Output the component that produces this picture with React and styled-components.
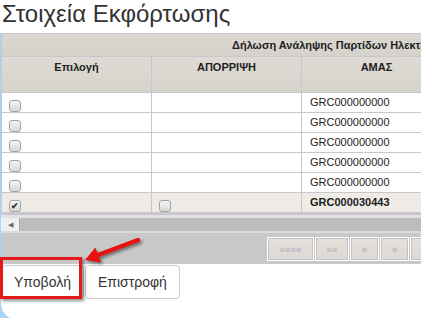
import React from 'react';
import styled, { createGlobalStyle } from 'styled-components';

const GlobalStyle = createGlobalStyle`
    html, body {
        margin: 0;
        padding: 0;
        overflow: hidden;
        background: #fff;
    }
    body {
        font-family: "Liberation Sans", Arial, sans-serif;
        color: #222;
    }
`;

const Page = styled.div`
    position: relative;
    width: 421px;
    height: 318px;
    overflow: hidden;
`;

const Title = styled.h1`
    margin: 0 0 5px;
    padding-left: 2px;
    height: 28px;

    font-size: 24px;
    line-height: 28px;
    font-weight: normal;
    color: #333;
    white-space: nowrap;
`;

const Frame = styled.div`
    height: 287px;
    padding-left: 1px;
    background: #aad4f6;
`;

const Panel = styled.div`
    height: 100%;
    background: #fff;
    border-bottom-left-radius: 17px;
    overflow: hidden;
`;

const Table = styled.div`
    width: 620px;
    border-top: 1px solid #c9c6ce;
    border-left: 1px solid #c9c6ce;
`;

const Caption = styled.div`
    height: 22px;
    padding-left: 230px;

    font-size: 11px;
    font-weight: bold;
    line-height: 22px;
    white-space: nowrap;
    color: #222;

    background: linear-gradient(#dcd8d2, #d5d1cb);
    border-bottom: 1px solid #c9c6ce;
`;

const Row = styled.div`
    display: grid;
    grid-template-columns: 150px 150px 150px 1fr;
    background: ${p => (p.$selected ? '#efebe7' : '#fff')};
    font-weight: ${p => (p.$selected ? 'bold' : 'normal')};
`;

const HeadCell = styled.div`
    height: 36px;
    padding-top: 4px;
    box-sizing: border-box;

    font-size: 11px;
    font-weight: bold;
    line-height: 13px;
    text-align: center;
    color: #222;

    background: linear-gradient(#dedad4, #d6d2cc);
    border-right: 1px solid #c9c6ce;
    border-bottom: 1px solid #c9c6ce;
`;

const Cell = styled.div`
    height: 19px;
    padding-left: ${p => (p.$box ? '7px' : '8px')};

    font-size: 11px;
    line-height: 19px;
    white-space: nowrap;
    color: #1c1c1c;

    border-right: 1px solid #c9c6ce;
    border-bottom: 1px solid #c9c6ce;
`;

const Check = styled.span`
    display: flex;
    align-items: center;
    justify-content: center;
    width: 12px;
    height: 12px;
    margin-top: 7px;
    box-sizing: border-box;

    font-size: 9px;
    line-height: 1;
    color: #333;

    background: linear-gradient(#f4f4f4, #d9d9d9);
    border: 1px solid #a3a3a3;
    border-radius: 3px;
`;

const ScrollArea = styled.div`
    padding-top: 3px;
    background: #e2e2e2;
    border-top: 2px solid #cac6cf;
    border-bottom: 2px solid #dcdcdc;
`;

const ScrollBar = styled.div`
    display: flex;
    height: 13px;
`;

const ScrollButton = styled.div`
    width: 18px;
    display: flex;
    align-items: center;
    justify-content: center;

    font-size: 7px;
    color: #6a6a6a;
    background: #f0f0f0;
`;

const ScrollThumb = styled.div`
    flex: 1;
    background: #bcbcbc;
    border-left: 1px solid #a9a9a9;
`;

const Pager = styled.div`
    display: flex;
    gap: 1px;
    height: 31px;
    padding: 4px 0 0 266px;
    box-sizing: border-box;
    background: #c8c8c8;
`;

const PageButton = styled.div`
    width: ${p => p.$w}px;
    height: 24px;
    box-sizing: border-box;
    display: flex;
    align-items: center;
    justify-content: center;
    flex-shrink: 0;

    font-size: 10px;
    font-weight: bold;
    color: #bab6c2;

    background: linear-gradient(#e4e0dc, #dcd8d4);
    border: 1px solid #fff;
    box-shadow: inset 0 0 0 1px #c4c0c8;
`;

const Actions = styled.div`
    display: flex;
    gap: 1px;
    margin-top: 1px;
`;

const Button = styled.button`
    height: 34px;
    padding: 0 12px;

    font-family: "Liberation Sans", Arial, sans-serif;
    font-size: 14px;
    color: #333;

    background: #fff;
    border: 1px solid #ccc;
    border-radius: 4px;
`;

const Callout = styled.div`
    position: absolute;
    left: 0;
    top: 257px;
    width: 82px;
    height: 42px;
    box-sizing: border-box;

    border: 3px solid #e41a1a;
    box-shadow: 2px 2px 3px rgba(0, 0, 0, 0.45);
    pointer-events: none;
`;

const Arrow = styled.svg`
    position: absolute;
    left: 0;
    top: 0;
    width: 421px;
    height: 318px;
    pointer-events: none;
    filter: drop-shadow(2px 2px 1.5px rgba(0, 0, 0, 0.45));
`;

const rows = [
    { code: 'GRC000000000' },
    { code: 'GRC000000000' },
    { code: 'GRC000000000' },
    { code: 'GRC000000000' },
    { code: 'GRC000000000' },
    { code: 'GRC000030443', selected: true },
];

const pages = [
    { label: '««««', w: 47 },
    { label: '««', w: 34 },
    { label: '«', w: 29 },
    { label: '»', w: 29 },
    { label: '»»', w: 34 },
];

const App = () => (
    <>
        <GlobalStyle />
        <Page>
            <Title>Στοιχεία Εκφόρτωσης</Title>
            <Frame>
                <Panel>
                    <Table>
                        <Caption>Δήλωση Ανάληψης Παρτίδων Ηλεκτρονικών Παραστατικών</Caption>
                        <Row>
                            <HeadCell>Επιλογή</HeadCell>
                            <HeadCell>ΑΠΟΡΡΙΨΗ</HeadCell>
                            <HeadCell>ΑΜΑΣ</HeadCell>
                            <HeadCell />
                        </Row>
                        {rows.map((r, i) => (
                            <Row key={i} $selected={r.selected}>
                                <Cell $box>
                                    <Check>{r.selected ? '✔' : ''}</Check>
                                </Cell>
                                <Cell $box>{r.selected && <Check />}</Cell>
                                <Cell>{r.code}</Cell>
                                <Cell />
                            </Row>
                        ))}
                    </Table>
                    <ScrollArea>
                        <ScrollBar>
                            <ScrollButton>◀</ScrollButton>
                            <ScrollThumb />
                        </ScrollBar>
                    </ScrollArea>
                    <Pager>
                        {pages.map(p => (
                            <PageButton key={p.label} $w={p.w}>{p.label}</PageButton>
                        ))}
                    </Pager>
                    <Actions>
                        <Button>Υποβολή</Button>
                        <Button>Επιστροφή</Button>
                    </Actions>
                </Panel>
            </Frame>
            <Callout />
            <Arrow viewBox="0 0 421 318">
                <line x1="138" y1="240" x2="98" y2="255" stroke="#e81212" strokeWidth="4.5" strokeLinecap="round" />
                <polygon points="85,260 95.3,247.6 100.9,262.6" fill="#e81212" />
            </Arrow>
        </Page>
    </>
);

export default App;
